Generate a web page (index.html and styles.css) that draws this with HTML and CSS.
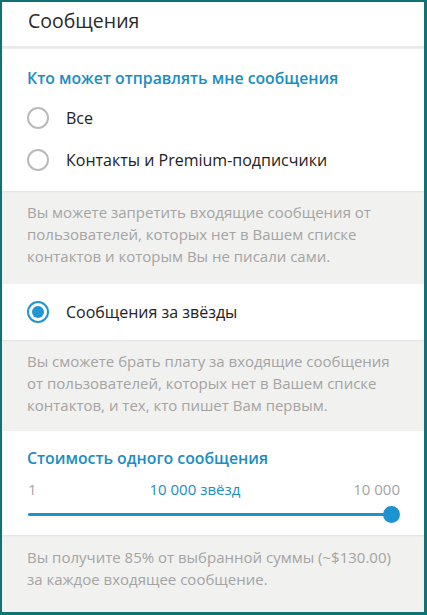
FILE: index.html
```html
<!DOCTYPE html>
<html lang="ru">
<head>
<meta charset="utf-8">
<title>Сообщения</title>
<link rel="stylesheet" href="styles.css">
</head>
<body>
<div class="frame">
  <header class="topbar">Сообщения</header>

  <section class="card card-first">
    <h2 class="card-title">Кто может отправлять мне сообщения</h2>
    <div class="option">
      <span class="radio"></span>
      <span class="option-label">Все</span>
    </div>
    <div class="option">
      <span class="radio"></span>
      <span class="option-label">Контакты и Premium-подписчики</span>
    </div>
  </section>

  <p class="note note-1">Вы можете запретить входящие сообщения от пользователей, которых нет в Вашем списке контактов и которым Вы не писали сами.</p>

  <section class="card card-single">
    <div class="option">
      <span class="radio radio-on"></span>
      <span class="option-label">Сообщения за звёзды</span>
    </div>
  </section>

  <p class="note note-2">Вы сможете брать плату за входящие сообщения от пользователей, которых нет в Вашем списке контактов, и тех, кто пишет Вам первым.</p>

  <section class="card card-price">
    <h2 class="card-title">Стоимость одного сообщения</h2>
    <div class="scale">
      <span class="scale-min">1</span>
      <span class="scale-value">10 000 звёзд</span>
      <span class="scale-max">10 000</span>
    </div>
    <div class="slider">
      <div class="slider-track"></div>
      <div class="slider-thumb"></div>
    </div>
  </section>

  <p class="note note-3">Вы получите 85% от выбранной суммы (~$130.00) за каждое входящее сообщение.</p>
</div>
</body>
</html>
```

FILE: styles.css
```css
html, body {
  margin: 0;
  padding: 0;
  background: #f1f1ef;
}

body {
  font-family: "Open Sans", "Noto Sans", sans-serif;
  color: #222;
}

.frame {
  box-sizing: border-box;
  height: 615px;
  overflow: hidden;
  border-style: solid;
  border-color: #0f7274;
  border-width: 2px 3px 3px 2px;
  background: #f1f1ef;
  display: flex;
  flex-direction: column;
}

.topbar {
  background: #fff;
  height: 45px;
  box-sizing: border-box;
  padding: 5px 0 0 26px;
  font-size: 19.5px;
  line-height: 28px;
  color: #2a2a2a;
  border-bottom: 1px solid #e9e9e9;
  box-shadow: 0 1px 2px rgba(0,0,0,0.05);
  position: relative;
  z-index: 1;
}

.card {
  background: #fff;
  padding: 0 24px 0 25px;
}

.card-first {
  padding-top: 18px;
  padding-bottom: 10px;
  margin-top: 2px;
}

.card-title {
  margin: 0 0 8px;
  font-size: 15.8px;
  line-height: 22px;
  font-weight: 600;
  color: #1a8dc2;
}

.option {
  display: flex;
  align-items: center;
  height: 42px;
}

.radio {
  box-sizing: border-box;
  width: 22px;
  height: 22px;
  border: 2px solid #bababa;
  border-radius: 50%;
  flex: none;
  display: flex;
  align-items: center;
  justify-content: center;
}

.radio-on {
  border-color: #2196d3;
}

.radio-on::after {
  content: "";
  width: 12px;
  height: 12px;
  border-radius: 50%;
  background: #2196d3;
}

.option-label {
  margin-left: 17px;
  font-size: 16px;
  line-height: 22px;
  color: #222;
}

.note {
  margin: 0;
  padding: 10px 24px 17px 25px;
  font-size: 15px;
  line-height: 22px;
  color: #a4a4a4;
  box-shadow: inset 0 1px 2px rgba(0,0,0,0.06);
}

.note-2 {
  padding-bottom: 15px;
}

.card-single {
  padding-top: 7px;
  padding-bottom: 7px;
}

.card-price {
  padding-top: 16px;
  padding-bottom: 0;
}

.card-price .card-title {
  margin-bottom: 10px;
}

.scale {
  display: flex;
  justify-content: space-between;
  font-size: 15px;
  line-height: 20px;
  color: #a4a4a4;
  padding-left: 1px;
}

.scale-value {
  color: #1a8dc2;
}

.slider {
  position: relative;
  height: 36px;
}

.slider-track {
  position: absolute;
  left: 1px;
  right: 8px;
  top: 14px;
  height: 3px;
  border-radius: 2px;
  background: #1c92cf;
}

.slider-thumb {
  position: absolute;
  right: 0;
  top: 7px;
  width: 17px;
  height: 17px;
  border-radius: 50%;
  background: #1c92cf;
}

.note-3 {
  padding-top: 11px;
}
```
